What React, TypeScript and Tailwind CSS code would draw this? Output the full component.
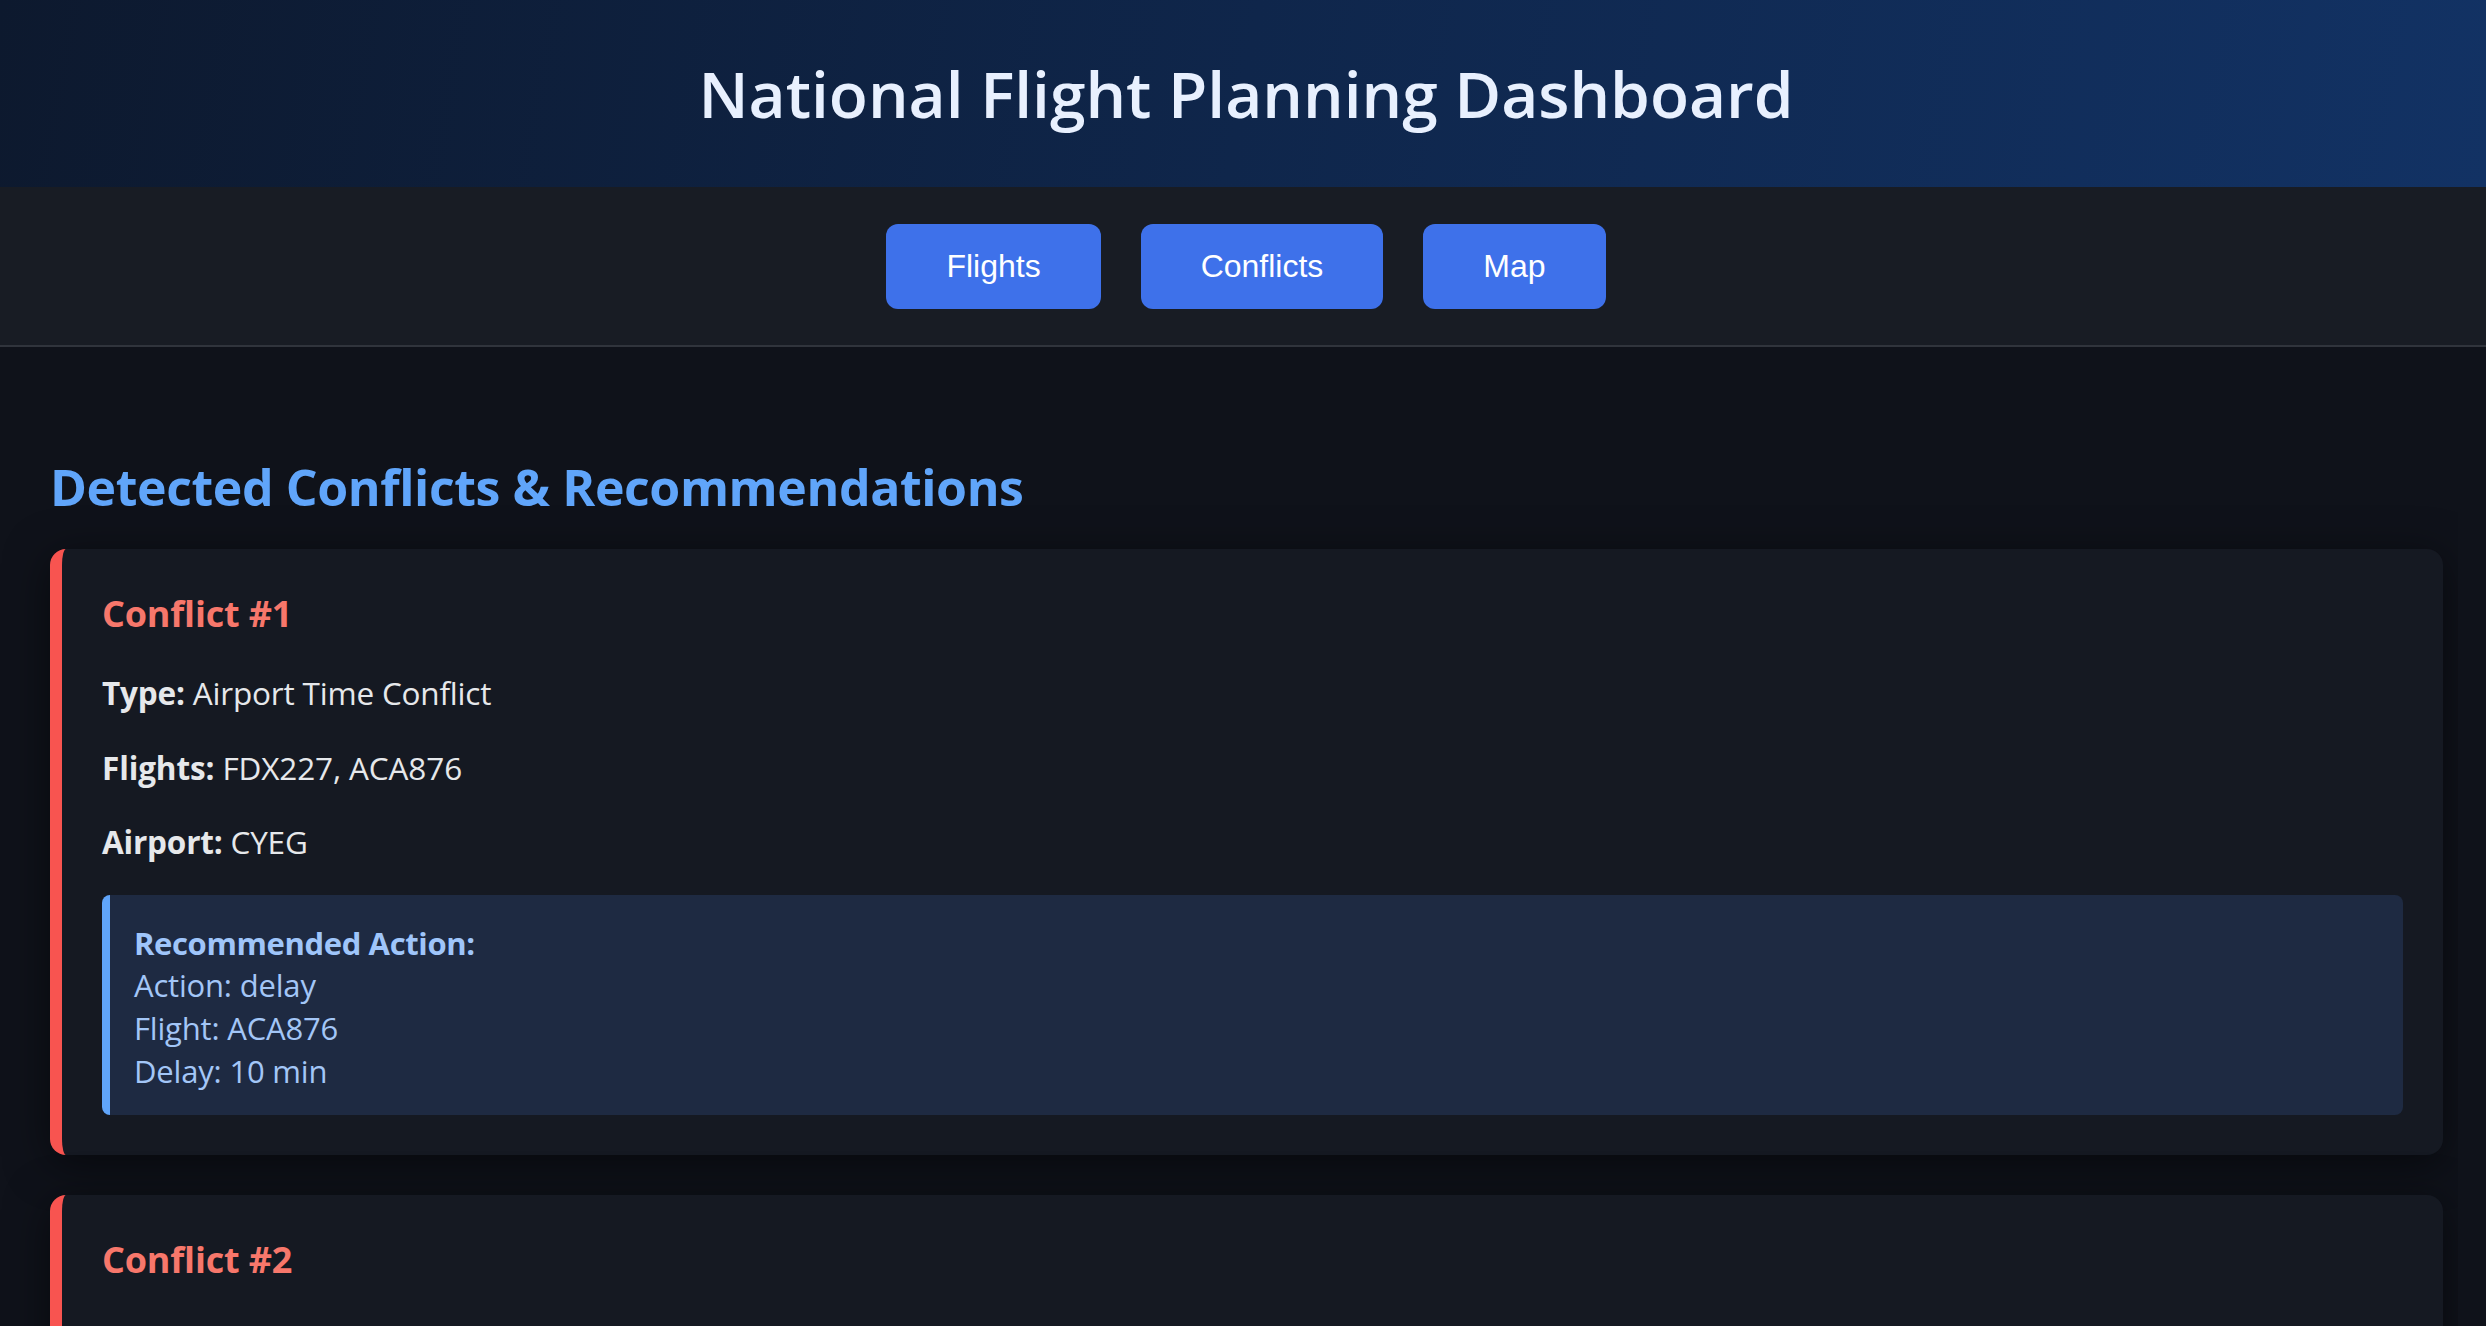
import React from "react";

type Conflict = {
  id: number;
  type: string;
  flights: string;
  airport: string;
  action: string;
  flight: string;
  delay: string;
};

const conflicts: Conflict[] = [
  { id: 1, type: "Airport Time Conflict", flights: "FDX227, ACA876", airport: "CYEG", action: "delay", flight: "ACA876", delay: "10 min" },
  { id: 2, type: "Airport Time Conflict", flights: "WJA512, ACA118", airport: "CYYZ", action: "delay", flight: "ACA118", delay: "5 min" },
];

function ConflictCard({ c }: { c: Conflict }) {
  return (
    <div className="mb-[40px] flex flex-col rounded-[16px] border-l-[12px] border-[#f85450] bg-[#151922] p-[40px] shadow-[0_8px_44px_rgba(0,0,0,0.5)]">
      <h3 className="text-[36px] leading-[50px] font-bold tracking-[-0.005em] text-[#f7776b]">Conflict #{c.id}</h3>
      <p className="mt-[33px] text-[31.5px] leading-[42.6px] tracking-[-0.006em] text-[#e6e8eb]">
        <strong className="font-bold">Type:</strong> {c.type}
      </p>
      <p className="mt-[32px] text-[31.5px] leading-[42.6px] tracking-[-0.004em] text-[#e6e8eb]">
        <strong className="font-bold">Flights:</strong> {c.flights}
      </p>
      <p className="mt-[32px] text-[31.5px] leading-[42.6px] tracking-[-0.006em] text-[#e6e8eb]">
        <strong className="font-bold">Airport:</strong> {c.airport}
      </p>
      <div className="mt-[31px] rounded-[8px] border-l-[8px] border-[#60a5fa] bg-[#1e2a42] px-[24px] pt-[27px] pb-[23px] text-[31px] leading-[42.6px] tracking-[-0.006em] text-[#a3c6f7]">
        <div className="font-bold tracking-[-0.012em] text-[#9fc5fa]">Recommended Action:</div>
        <div>Action: {c.action}</div>
        <div>Flight: {c.flight}</div>
        <div>Delay: {c.delay}</div>
      </div>
    </div>
  );
}

export default function App() {
  return (
    <div className="h-[1326px] overflow-hidden bg-[#0f121a] font-['Open_Sans','Noto_Sans',sans-serif]">
      <header className="bg-[linear-gradient(100deg,#0d192e_0%,#0f264b_50%,#123264_100%)] pt-[51px] pb-[51px] pl-[6px] text-center">
        <h1 className="text-[64px] leading-[85px] font-semibold text-[#e8f0fe]">
          National Flight Planning Dashboard
        </h1>
      </header>
      <nav className="flex justify-center gap-[40px] border-b-2 border-[#30343c] bg-[#181c24] pt-[37px] pb-[36px] pl-[6px]">
        {["Flights", "Conflicts", "Map"].map((t) => (
          <button
            key={t}
            className="rounded-[12px] bg-[#3e71ea] px-[60px] py-[24px] font-['Liberation_Sans',Arial,sans-serif] text-[32px] leading-[37px] text-white"
          >
            {t}
          </button>
        ))}
      </nav>
      <div className="flex">
        <main className="w-[2458px] shrink-0 overflow-hidden pt-[64px] pr-[15px] pl-[50px]">
          <h2 className="mt-[42px] mb-[27px] text-[50px] leading-[69px] font-bold tracking-[-0.008em] text-[#60a5fa]">
            Detected Conflicts &amp; Recommendations
          </h2>
          {conflicts.map((c) => (
            <ConflictCard key={c.id} c={c} />
          ))}
        </main>
        <div className="flex-1" />
      </div>
    </div>
  );
}
